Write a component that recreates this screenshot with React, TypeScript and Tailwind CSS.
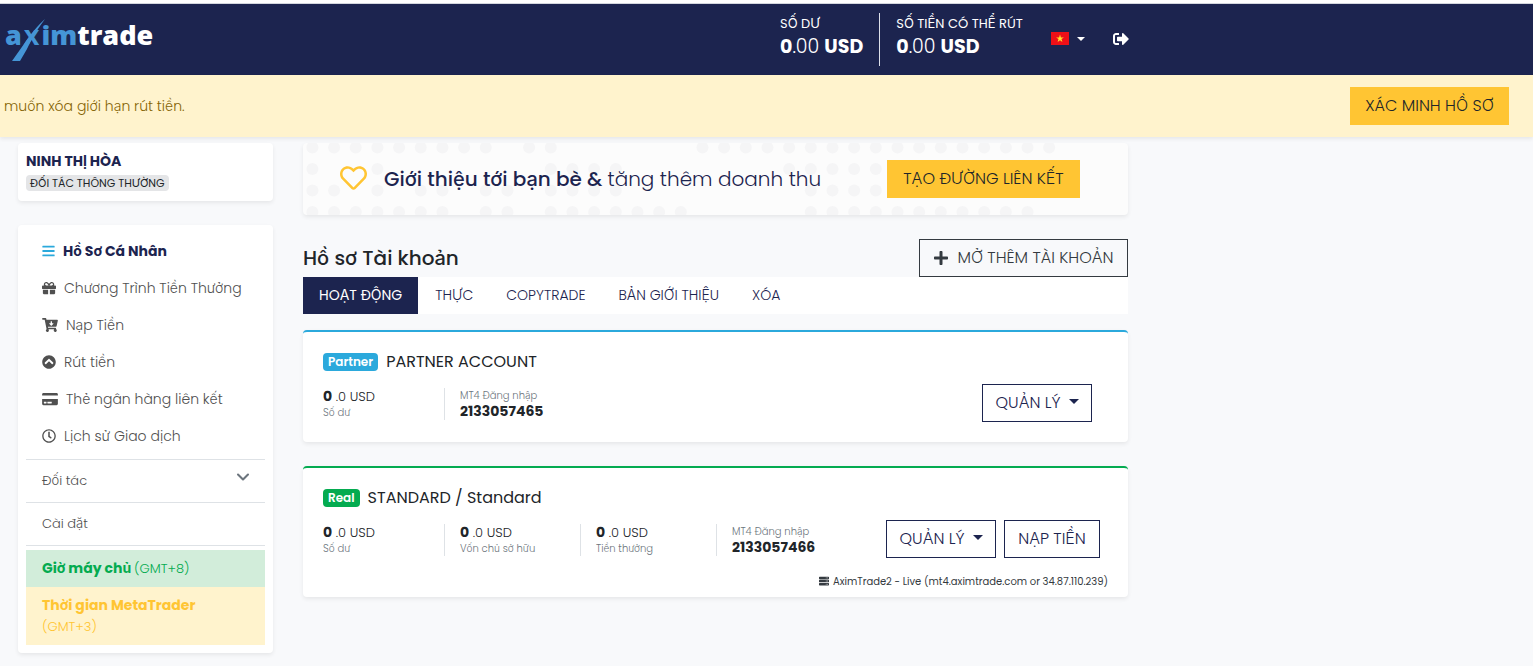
import React from "react";
import {
    FaBars,
    FaCartArrowDown,
    FaChevronCircleUp,
    FaCreditCard,
    FaGift,
    FaPlus,
    FaRegClock,
    FaRegHeart,
    FaServer,
    FaSignOutAlt,
} from "react-icons/fa";
import { FiChevronDown } from "react-icons/fi";

type Stat = {
    label: string;
    whole: string;
    rest?: string;
    labelFirst?: boolean;
};

type Account = {
    kind: string;
    title: string;
    badgeClass: string;
    borderClass: string;
    stats: Stat[];
    canDeposit: boolean;
    server?: string;
};

const NAV_ITEMS = [
    { label: "Chương Trình Tiền Thưởng", icon: <FaGift className="size-3.5" /> },
    { label: "Nạp Tiền", icon: <FaCartArrowDown className="h-3.5 w-4" /> },
    { label: "Rút tiền", icon: <FaChevronCircleUp className="size-3.5" /> },
    { label: "Thẻ ngân hàng liên kết", icon: <FaCreditCard className="h-3.5 w-4" /> },
    { label: "Lịch sử Giao dịch", icon: <FaRegClock className="size-3.5" /> },
];

const TABS = ["HOẠT ĐỘNG", "THỰC", "COPYTRADE", "BẢN GIỚI THIỆU", "XÓA"];

const ACCOUNTS: Account[] = [
    {
        kind: "Partner",
        title: "PARTNER ACCOUNT",
        badgeClass: "bg-[#2ba9dc]",
        borderClass: "border-[#2ba9dc]",
        stats: [
            { label: "Số dư", whole: "0", rest: ".0 USD" },
            { label: "MT4 Đăng nhập", whole: "2133057465", labelFirst: true },
        ],
        canDeposit: false,
    },
    {
        kind: "Real",
        title: "STANDARD / Standard",
        badgeClass: "bg-[#04ab50]",
        borderClass: "border-[#04ab50]",
        stats: [
            { label: "Số dư", whole: "0", rest: ".0 USD" },
            { label: "Vốn chủ sở hữu", whole: "0", rest: ".0 USD" },
            { label: "Tiền thưởng", whole: "0", rest: ".0 USD" },
            { label: "MT4 Đăng nhập", whole: "2133057466", labelFirst: true },
        ],
        canDeposit: true,
        server: "AximTrade2 - Live (mt4.aximtrade.com or 34.87.110.239)",
    },
];

// Dotted world map behind the referral banner, one string per row
const DOT_ROWS = [
    "#########.##......#################",
    "#..#.......####.......#####........",
    "##.#.##.##.####........####........",
    "#######.##.#######.....###########.",
];

function Caret({ className = "h-[5px] w-[10px]" }: { className?: string }) {
    return (
        <svg viewBox="0 0 10 5" className={`fill-current ${className}`} aria-hidden="true">
            <path d="M0 0h10L5 5z" />
        </svg>
    );
}

function Logo() {
    return (
        <a
            href="#"
            className="relative mb-2 block pl-[5px] font-['Open_Sans','Noto_Sans',sans-serif] text-[27px] leading-9 font-extrabold text-white"
        >
            <span className="text-[#4595d6]">
                a<span className="mx-0.5 font-bold">x</span>im
            </span>
            trade
            <svg viewBox="0 0 34 42" className="absolute top-0.5 left-3 h-[42px] w-[34px] fill-[#4595d6]" aria-hidden="true">
                <path d="M33 0C26 6 18 16 12 25L0 42h8l7-12C20 19 27 8 33 0z" />
            </svg>
        </a>
    );
}

function Balance({ label }: { label: string }) {
    return (
        <div className="px-4 first:border-r first:border-[#dcdfe9]">
            <div className="text-[13px] leading-[22px]">{label}</div>
            <div className="text-[19px] leading-6">
                <strong className="font-bold">0</strong>
                <span className="font-light">.00</span> <strong className="font-bold">USD</strong>
            </div>
        </div>
    );
}

function Header() {
    return (
        <header className="border-t border-[#d3d6de] bg-[#1c244f] text-white">
            <div className="flex h-[71px] items-center pb-0.5">
                <div className="w-[764px]">
                    <Logo />
                </div>
                <div className="mt-0.5 flex [&>div]:h-[53px]">
                    <Balance label="SỐ DƯ" />
                    <Balance label="SỐ TIỀN CÓ THỂ RÚT" />
                </div>
                <button type="button" aria-label="Tiếng Việt" className="ml-3 flex items-center gap-2">
                    <svg viewBox="0 0 18 13" className="h-[13px] w-[18px]" aria-hidden="true">
                        <path fill="#ee1017" d="M0 0h18v13H0z" />
                        <path fill="#ffe32e" d="m9 2.6.9 2.8h3L10.500 7.100l.9 2.800L9 8.200l-2.400 1.700.9-2.800-2.400-1.700h3z" />
                    </svg>
                    <Caret className="h-1 w-2" />
                </button>
                <button type="button" aria-label="Đăng xuất" className="ml-7">
                    <FaSignOutAlt className="size-4" />
                </button>
            </div>
        </header>
    );
}

function Sidebar() {
    return (
        <aside className="w-[255px] shrink-0">
            <div className="h-[58px] rounded bg-white px-2 pt-2 shadow-[0_2px_4px_rgba(0,0,0,0.075)]">
                <div className="text-sm font-bold text-[#1c244f]">NINH THỊ HÒA</div>
                <div className="mt-1 flex">
                    <span className="rounded bg-[#e4e5e7] px-1 text-[11px] leading-4 text-[#212529]">
                        ĐỐI TÁC THÔNG THƯỜNG
                    </span>
                </div>
            </div>

            <div className="mt-6 rounded bg-white p-2 shadow-[0_2px_4px_rgba(0,0,0,0.075)]">
                <nav className="mb-1">
                    <a href="#" className="flex h-[37px] items-center gap-2 px-4 pb-0.5 text-sm font-bold text-[#1c244f]">
                        <FaBars className="h-3.5 w-[13px] text-[#2ba9dc]" />
                        Hồ Sơ Cá Nhân
                    </a>
                    {NAV_ITEMS.map((item) => (
                        <a
                            key={item.label}
                            href="#"
                            className="flex h-[37px] items-center gap-2 px-4 pb-0.5 text-sm font-light whitespace-nowrap text-[#505050]"
                        >
                            {item.icon}
                            {item.label}
                        </a>
                    ))}
                </nav>

                <button
                    type="button"
                    className="flex h-[43px] w-full items-center justify-between border-t border-[#dee2e6] px-4 text-[13px] font-light text-[#505050]"
                >
                    Đối tác
                    <FiChevronDown className="-mr-1 mb-2 size-5 stroke-[2.5] text-[#6c757d]" />
                </button>
                <a
                    href="#"
                    className="mb-1 flex h-11 items-center border-y border-[#dee2e6] px-4 text-[13px] font-light text-[#505050]"
                >
                    Cài đặt
                </a>

                <div className="bg-[#d2edda] px-4 py-2 text-sm leading-[21px] font-bold text-[#04ab50]">
                    Giờ máy chủ <span className="text-[13px] font-light">(GMT+8)</span>
                </div>
                <div className="bg-[#fff3cd] px-4 py-2 text-sm leading-[21px] font-bold text-[#ffc533]">
                    Thời gian MetaTrader
                    <div className="text-[13px] font-light">(GMT+3)</div>
                </div>
            </div>
        </aside>
    );
}

function ReferralBanner() {
    return (
        <section className="relative flex h-[72px] items-center overflow-hidden rounded bg-[#fcfcfc] pl-[37px] shadow-[0_2px_4px_rgba(0,0,0,0.075)]">
            <svg viewBox="0 0 825 72" className="absolute inset-0 h-[72px] w-[825px] fill-[#f5f5f6]" aria-hidden="true">
                {DOT_ROWS.map((row, y) =>
                    [...row].map((cell, x) =>
                        cell === "#" ? <circle key={`${x}-${y}`} cx={9.4 + x * 21.67} cy={4.5 + y * 21.5} r={6} /> : null,
                    ),
                )}
            </svg>
            <FaRegHeart className="relative mb-0.5 h-7 w-[27px] text-[#ffc533]" />
            <p className="relative ml-[17px] w-[503px] text-xl whitespace-nowrap text-[#1c244f]">
                <span className="font-medium">Giới thiệu tới bạn bè &amp;</span>{" "}
                <span className="font-light">tăng thêm doanh thu</span>
            </p>
            <button type="button" className="relative h-[38px] w-[193px] bg-[#ffc533] text-base font-light text-[#212529]">
                TẠO ĐƯỜNG LIÊN KẾT
            </button>
        </section>
    );
}

function StatCell({ stat }: { stat: Stat }) {
    const label = <div className="text-[10px] leading-[15px] font-light text-[#6c757d]">{stat.label}</div>;

    return (
        <div className="h-8 w-[136px] border-l border-[#dee2e6] pl-[15px] whitespace-nowrap first:w-[121px] first:border-l-0 first:pl-0">
            {stat.labelFirst && label}
            <div className="text-[13px] leading-4">
                <strong className="text-sm leading-4 font-bold">{stat.whole}</strong>
                {stat.rest && <span className="font-light"> {stat.rest}</span>}
            </div>
            {!stat.labelFirst && label}
        </div>
    );
}

function AccountCard({ account }: { account: Account }) {
    return (
        <article
            className={`mb-6 rounded border-t-2 bg-white px-5 pt-[18px] shadow-[0_2px_4px_rgba(0,0,0,0.075)] ${account.borderClass}`}
        >
            <h3 className="flex items-center gap-2 text-base leading-6 text-[#212529]">
                <span className={`rounded px-[5px] text-xs leading-[18px] font-semibold text-white ${account.badgeClass}`}>
                    {account.kind}
                </span>
                {account.title}
            </h3>
            <div className="mt-2.5 flex h-[38px] items-center justify-between text-[#212529]">
                <div className="mt-0.5 flex">
                    {account.stats.map((stat) => (
                        <StatCell key={stat.label} stat={stat} />
                    ))}
                </div>
                <div className={account.canDeposit ? "mr-2 flex gap-2" : "mr-4 flex gap-2"}>
                    <button
                        type="button"
                        className="flex h-[38px] w-[110px] items-center justify-center gap-2 border border-[#1c244f] text-base font-light text-[#1c244f]"
                    >
                        QUẢN LÝ
                        <Caret className="mb-1 h-[5px] w-[10px]" />
                    </button>
                    {account.canDeposit && (
                        <button
                            type="button"
                            className="h-[38px] w-24 border border-[#1c244f] text-base font-light text-[#1c244f]"
                        >
                            NẠP TIỀN
                        </button>
                    )}
                </div>
            </div>
            <div className="pt-4 pb-1">
                {account.server && (
                    <p className="flex h-[19px] items-start justify-end gap-1 text-[10px] leading-[15px] text-[#343a40]">
                        <FaServer className="mt-0.5 size-2.5" />
                        {account.server}
                    </p>
                )}
            </div>
        </article>
    );
}

export default function App() {
    return (
        <div className="min-h-screen bg-[#f8f9fb] font-['Poppins','Inter','Noto_Sans',sans-serif]">
            <div className="h-[3px] bg-white" />
            <Header />

            <div className="relative flex h-[62px] items-center justify-between bg-[#fff3cd] pr-6 pl-1 shadow-[0_2px_4px_rgba(0,0,0,0.075)]">
                <p className="text-sm font-light text-[#856404]">muốn xóa giới hạn rút tiền.</p>
                <button type="button" className="h-[38px] w-[159px] bg-[#ffc533] text-base font-light text-[#212529]">
                    XÁC MINH HỒ SƠ
                </button>
            </div>

            <div className="flex items-start gap-[30px] pt-1.5 pl-[18px]">
                <Sidebar />

                <main className="max-w-[825px] flex-1">
                    <ReferralBanner />

                    <div className="mt-6 flex h-[38px] items-center justify-between">
                        <h2 className="text-xl font-medium text-[#212529]">Hồ sơ Tài khoản</h2>
                        <button
                            type="button"
                            className="flex h-[38px] w-[209px] items-center justify-center gap-2 border border-[#343a40] text-base font-light text-[#343a40]"
                        >
                            <FaPlus className="size-4" />
                            MỞ THÊM TÀI KHOẢN
                        </button>
                    </div>

                    <div role="tablist" className="mb-4 flex h-[37px] gap-px bg-white text-sm">
                        {TABS.map((tab, i) => (
                            <button
                                key={tab}
                                type="button"
                                role="tab"
                                aria-selected={i === 0}
                                className={
                                    i === 0 ? "bg-[#1c244f] px-4 pb-0.5 text-white" : "px-4 pb-0.5 font-light text-[#1c244f]"
                                }
                            >
                                {tab}
                            </button>
                        ))}
                    </div>

                    {ACCOUNTS.map((account) => (
                        <AccountCard key={account.kind} account={account} />
                    ))}
                </main>
            </div>
        </div>
    );
}
